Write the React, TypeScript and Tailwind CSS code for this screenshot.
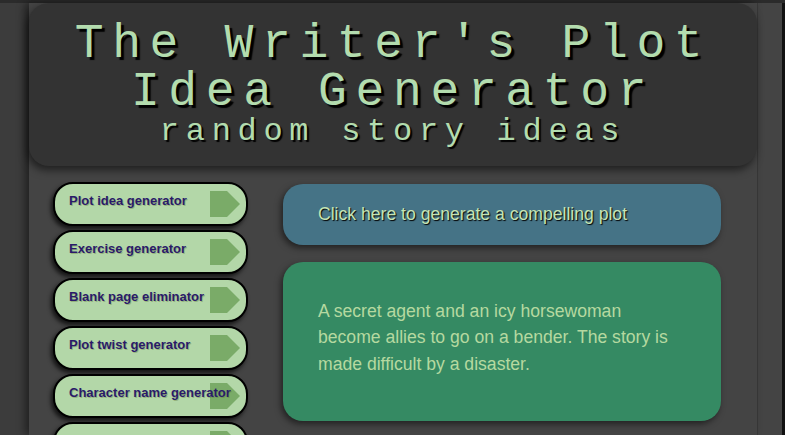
const tools = [
  'Plot idea generator',
  'Exercise generator',
  'Blank page eliminator',
  'Plot twist generator',
  'Character name generator',
  'Setting generator',
];

const Arrow = () => (
  <svg
    className="absolute left-[155px] top-[7px]"
    width="30"
    height="26"
    viewBox="0 0 30 26"
  >
    <polygon points="0,0 17,0 30,13 17,26 0,26" fill="#7aab68" />
  </svg>
);

const App = () => {
  return (
    <div className="h-[435px] overflow-hidden bg-[#3c3c3c] flex flex-col">
      <div className="h-[3px] bg-[#2b2b2b] shrink-0" />
      <div className="flex flex-1 min-h-0">
        <div className="w-[29px] shrink-0" />
        <div className="w-[728px] shrink-0 bg-[#444444] shadow-[-4px_0_8px_rgba(0,0,0,0.45)] z-10">
          <header className="rounded-[20px] bg-[#333333] pt-[17px] pb-[18px] text-center text-[#b3dcae] shadow-[-2px_4px_8px_rgba(0,0,0,0.55)] font-['Liberation_Mono',monospace]">
            <h1 className="text-[48px] leading-[48px] tracking-[0.18em] [text-shadow:3px_3px_1px_#000]">
              The Writer's Plot
              <br />
              Idea Generator
            </h1>
            <p className="text-[32px] leading-[32px] tracking-[6.7px] [text-shadow:2px_2px_1px_#000]">
              random story ideas
            </p>
          </header>

          <div className="flex gap-[35px] pl-[24px] pt-[16px]">
            <nav className="w-[195px] flex flex-col gap-[4px] font-['Liberation_Sans',Arial,sans-serif]">
              {tools.map((t) => (
                <div
                  key={t}
                  className="relative h-[44px] w-[195px] shrink-0 cursor-pointer rounded-[20px] border-2 border-black bg-[#b3d7a8] pl-[14px] pt-[9px] shadow-[-2px_3px_4px_rgba(0,0,0,0.7)]"
                >
                  <Arrow />
                  <span className="relative block text-[13px] font-bold leading-[15px] text-[#2a1a6a] [text-shadow:1px_1px_0_rgba(90,110,40,0.35)] whitespace-nowrap">
                    {t}
                  </span>
                </div>
              ))}
            </nav>

            <main className="w-[438px] pt-[2px] flex flex-col gap-[17px] font-['Liberation_Sans',Arial,sans-serif]">
              <button className="h-[61px] rounded-[20px] bg-[#457386] pl-[35px] text-left text-[17.6px] text-[#c6e4b4] [text-shadow:1px_1px_1px_#000] shadow-[-2px_3px_6px_rgba(0,0,0,0.5)]">
                Click here to generate a compelling plot
              </button>
              <div className="rounded-[20px] bg-[#358a63] px-[35px] pt-[36px] pb-[44px] text-[17.6px] leading-[26.4px] text-[#b5d9a0] shadow-[-2px_3px_6px_rgba(0,0,0,0.5)]">
                A secret agent and an icy horsewoman become allies to go on a bender. The story is made difficult by a disaster.
              </div>
            </main>
          </div>
        </div>
        <div className="w-[25px] shrink-0 bg-[#444444] border-l border-[#3a3a3a]" />
        <div className="flex-1 bg-[#111111]" />
      </div>
    </div>
  );
};

export default App;
